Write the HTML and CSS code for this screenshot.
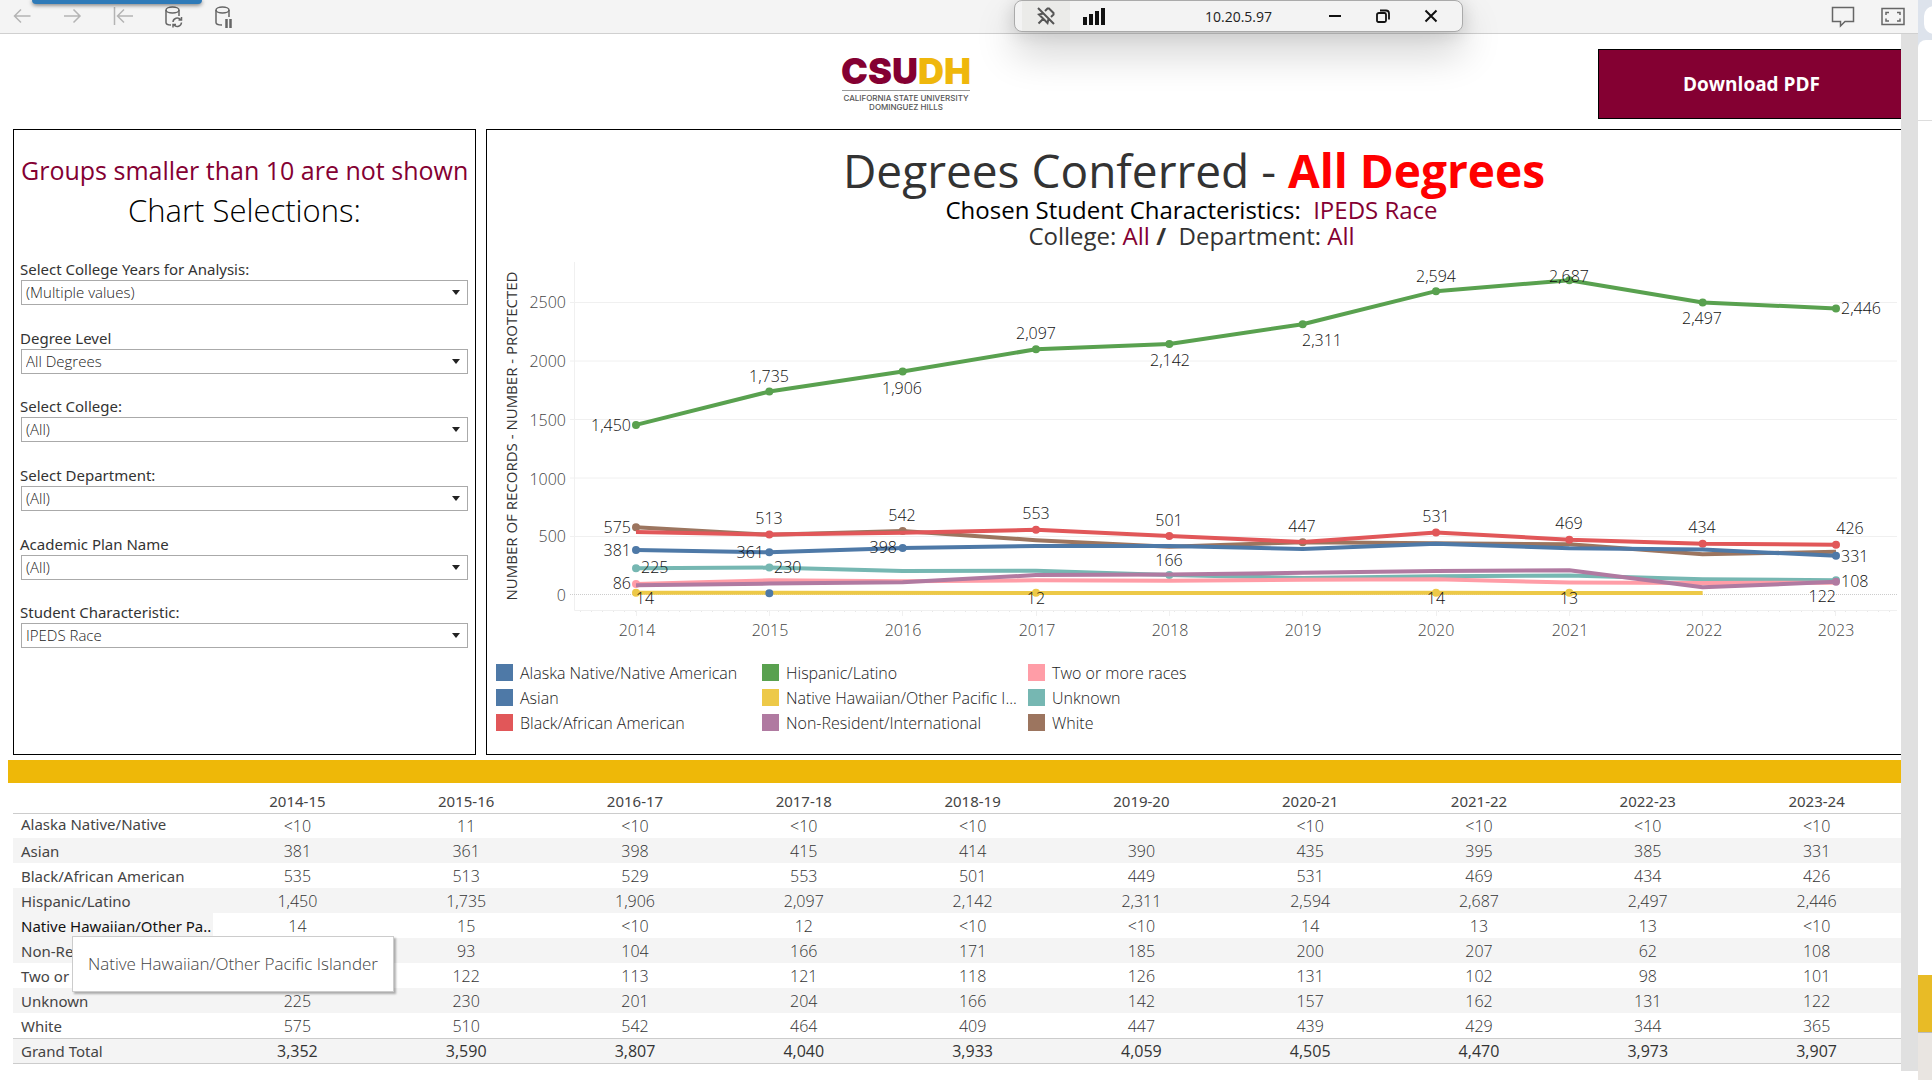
FILE: index.html
```html
<!DOCTYPE html>
<html lang="en">
<head>
<meta charset="utf-8">
<title>Degrees Conferred</title>
<link rel="stylesheet" href="styles.css">
</head>
<body>
<div class="app">
  <header class="toolbar">
    <div class="tools">
      <button class="tool faded" aria-label="Undo"><svg width="24" height="24" viewBox="0 0 24 24"><path d="M20.500 12H4M11 5.500L4.500 12L11 18.500"/></svg></button>
      <button class="tool faded" aria-label="Redo"><svg width="24" height="24" viewBox="0 0 24 24"><path d="M4 12H20M13.500 5.500L20 12L13.500 18.500"/></svg></button>
      <button class="tool faded" aria-label="Revert"><svg width="24" height="24" viewBox="0 0 24 24"><path d="M4.500 3V21M23 12H7.500M14 5.500L7.500 12L14 18.500"/></svg></button>
      <button class="tool" aria-label="Refresh data"><svg width="24" height="24" viewBox="0 0 24 24"><ellipse cx="12.500" cy="6" rx="6.500" ry="3"/><path d="M6 6V18.500Q6 21 11 21M19 6V12M13 18a4.300 4.300 0 0 1 7.500-2.500M21.500 13v3h-3M21.500 18.500a4.300 4.300 0 0 1-7.500 2.500M13 23.500v-3h3"/></svg></button>
      <button class="tool" aria-label="Pause updates"><svg width="24" height="24" viewBox="0 0 24 24"><ellipse cx="12.500" cy="6" rx="6.500" ry="3"/><path d="M6 6V18.500Q6 21 12 21M19 6V13"/><path d="M16.500 15V24M20.500 15V24" stroke-width="2.500"/></svg></button>
    </div>
    <div class="tools">
      <button class="tool" aria-label="Comments"><svg width="24" height="24" viewBox="0 0 24 24"><path d="M1.500 3.500H22.500V17.500H14L9.500 22V17.500H1.500Z"/></svg></button>
      <button class="tool" aria-label="Full screen"><svg width="24" height="24" viewBox="0 0 24 24"><path d="M1 4.500H23V20.500H1ZM5 11V8.500H8M16 8.500H19V11M19 14.500V17H16M8 17H5V14.500"/></svg></button>
    </div>
  </header>

  <div class="viewer">
    <main class="dashboard">
      <div class="banner">
        <svg class="logo" viewBox="0 0 128 54" role="img" aria-label="CSUDH">
          <text class="logo-name" x="64" y="26" text-anchor="middle"><tspan fill="#840032">CSU</tspan><tspan fill="#efb70c">DH</tspan></text>
          <path d="M0 32.500H128" stroke="#999"/>
          <text class="logo-sub" x="64" y="43" text-anchor="middle">CALIFORNIA STATE UNIVERSITY</text>
          <text class="logo-sub" x="64" y="52" text-anchor="middle">DOMINGUEZ HILLS</text>
        </svg>
        <button class="download">Download PDF</button>
      </div>

      <div class="panels">
        <section class="filters">
          <p class="note">Groups smaller than 10 are not shown</p>
          <h2>Chart Selections:</h2>
          <div class="fields">
            <div class="field"><label for="years">Select College Years for Analysis:</label><div class="pick"><select id="years"><option>(Multiple values)</option></select></div></div>
            <div class="field"><label for="level">Degree Level</label><div class="pick"><select id="level"><option>All Degrees</option></select></div></div>
            <div class="field"><label for="college">Select College:</label><div class="pick"><select id="college"><option>(All)</option></select></div></div>
            <div class="field"><label for="dept">Select Department:</label><div class="pick"><select id="dept"><option>(All)</option></select></div></div>
            <div class="field"><label for="plan">Academic Plan Name</label><div class="pick"><select id="plan"><option>(All)</option></select></div></div>
            <div class="field"><label for="trait">Student Characteristic:</label><div class="pick"><select id="trait"><option>IPEDS Race</option></select></div></div>
          </div>
        </section>

        <section class="report">
          <h1>Degrees Conferred - <strong>All Degrees</strong></h1>
          <p class="sub dark">Chosen Student Characteristics:&nbsp; <span class="hl">IPEDS Race</span></p>
          <p class="sub">College: <span class="hl">All</span> <b>/</b>&nbsp; Department: <span class="hl">All</span></p>

          <svg class="chart" viewBox="0 0 1414 400" role="img" aria-label="Degrees conferred by year">
            <path class="grid" d="M83 53.500H1410M83 112H1410M83 170.500H1410M83 229H1410M83 287.500H1410M87.500 13V361.500H1410"/>
            <path class="grid" d="M149.500 362v5M282.500 362v5M415.500 362v5M549.500 362v5M682.500 362v5M815.500 362v5M949.500 362v5M1082.500 362v5M1215.500 362v5M1348.500 362v5"/>
            <path class="minor" d="M93 362.500H1410"/>
            <path class="zero" d="M83 345.500H1410"/>

            <!-- x unit: one year from 2014; y unit: one degree -->
            <g class="series" transform="translate(149 345.500) scale(133.333 -0.11695)">
              <g stroke="#9c755f"><polyline points="0,575 1,510 2,542 3,464 4,409 5,447 6,439 7,429 8,344 9,365"/><path class="dots" d="M0 575h0M2 542h0M5 447h0"/></g>
              <g stroke="#76b7b2"><polyline points="0,225 1,230 2,201 3,204 4,166 5,142 6,157 7,162 8,131 9,122"/><path class="dots" d="M0 225h0M1 230h0M4 166h0M9 122h0"/></g>
              <g stroke="#ff9da7"><polyline points="0,90 1,122 2,113 3,121 4,118 5,126 6,131 7,102 8,98 9,101"/><path class="dots" d="M0 90h0"/></g>
              <g stroke="#b07aa1"><polyline points="0,79 1,93 2,104 3,166 4,171 5,185 6,200 7,207 8,62 9,108"/><path class="dots" d="M9 108h0"/></g>
              <g stroke="#edc948"><polyline points="0,14 1,15 3,12 6,14 7,13 8,13"/><path class="dots" d="M0 14h0M3 14h0M6 14h0M7 14h0"/></g>
              <g stroke="#59a14f"><polyline points="0,1450 1,1735 2,1906 3,2097 4,2142 5,2311 6,2594 7,2687 8,2497 9,2446"/><path class="dots" d="M0 1450h0M1 1735h0M2 1906h0M3 2097h0M4 2142h0M5 2311h0M6 2594h0M7 2687h0M8 2497h0M9 2446h0"/></g>
              <g stroke="#e15759"><polyline points="0,535 1,513 2,529 3,553 4,501 5,449 6,531 7,469 8,434 9,426"/><path class="dots" d="M1 513h0M3 553h0M4 501h0M6 531h0M7 469h0M8 434h0M9 426h0"/></g>
              <g stroke="#4e79a7"><polyline points="0,381 1,361 2,398 3,415 4,414 5,390 6,435 7,395 8,385 9,331"/><path class="dots" d="M0 381h0M1 361h0M2 398h0M9 331h0M1 11h0"/></g>
            </g>

            <g class="ticks" text-anchor="end">
              <text x="79" y="59">2500</text><text x="79" y="118">2000</text><text x="79" y="177">1500</text><text x="79" y="236">1000</text><text x="79" y="293">500</text><text x="79" y="352">0</text>
            </g>
            <g class="ticks" text-anchor="middle">
              <text x="150" y="387">2014</text><text x="283" y="387">2015</text><text x="416" y="387">2016</text><text x="550" y="387">2017</text><text x="683" y="387">2018</text><text x="816" y="387">2019</text><text x="949" y="387">2020</text><text x="1083" y="387">2021</text><text x="1217" y="387">2022</text><text x="1349" y="387">2023</text>
            </g>
            <text class="axis-title" transform="translate(30 187) rotate(-90)" text-anchor="middle">NUMBER OF RECORDS - NUMBER - PROTECTED</text>

            <g class="marks" text-anchor="middle">
              <text x="282" y="133">1,735</text><text x="415" y="145">1,906</text><text x="549" y="90">2,097</text><text x="683" y="117">2,142</text><text x="835" y="97">2,311</text><text x="949" y="33">2,594</text><text x="1082" y="33">2,687</text><text x="1215" y="75">2,497</text>
              <text x="282" y="275">513</text><text x="415" y="272">542</text><text x="549" y="270">553</text><text x="682" y="277">501</text><text x="682" y="317">166</text><text x="815" y="283">447</text><text x="949" y="273">531</text><text x="1082" y="280">469</text><text x="1215" y="284">434</text><text x="1363" y="285">426</text>
              <text x="158" y="355">14</text><text x="549" y="355">12</text><text x="949" y="355">14</text><text x="1082" y="355">13</text>
            </g>
            <g class="marks" text-anchor="end">
              <text x="144" y="182">1,450</text><text x="144" y="284">575</text><text x="144" y="307">381</text><text x="144" y="340">86</text><text x="277" y="309">361</text><text x="410" y="304">398</text><text x="1349" y="353">122</text>
            </g>
            <g class="marks">
              <text x="154" y="324">225</text><text x="287" y="324">230</text><text x="1354" y="65">2,446</text><text x="1354" y="313">331</text><text x="1354" y="338">108</text>
            </g>
          </svg>

          <ul class="legend">
            <li><i class="blue"></i>Alaska Native/Native American</li>
            <li><i class="blue"></i>Asian</li>
            <li><i class="red"></i>Black/African American</li>
            <li><i class="green"></i>Hispanic/Latino</li>
            <li><i class="yellow"></i>Native Hawaiian/Other Pacific I...</li>
            <li><i class="purple"></i>Non-Resident/International</li>
            <li><i class="pink"></i>Two or more races</li>
            <li><i class="teal"></i>Unknown</li>
            <li><i class="brown"></i>White</li>
          </ul>
        </section>
      </div>

      <div class="band"></div>

      <div class="crosstab">
        <table>
          <thead><tr><td class="name"></td><th>2014-15</th><th>2015-16</th><th>2016-17</th><th>2017-18</th><th>2018-19</th><th>2019-20</th><th>2020-21</th><th>2021-22</th><th>2022-23</th><th>2023-24</th></tr></thead>
          <tbody>
            <tr class="first"><th class="name">Alaska Native/Native</th><td>&lt;10</td><td>11</td><td>&lt;10</td><td>&lt;10</td><td>&lt;10</td><td></td><td>&lt;10</td><td>&lt;10</td><td>&lt;10</td><td>&lt;10</td></tr>
            <tr class="shade"><th class="name">Asian</th><td>381</td><td>361</td><td>398</td><td>415</td><td>414</td><td>390</td><td>435</td><td>395</td><td>385</td><td>331</td></tr>
            <tr><th class="name">Black/African American</th><td>535</td><td>513</td><td>529</td><td>553</td><td>501</td><td>449</td><td>531</td><td>469</td><td>434</td><td>426</td></tr>
            <tr class="shade"><th class="name">Hispanic/Latino</th><td>1,450</td><td>1,735</td><td>1,906</td><td>2,097</td><td>2,142</td><td>2,311</td><td>2,594</td><td>2,687</td><td>2,497</td><td>2,446</td></tr>
            <tr><th class="name hover">Native Hawaiian/Other Pa..</th><td>14</td><td>15</td><td>&lt;10</td><td>12</td><td>&lt;10</td><td>&lt;10</td><td>14</td><td>13</td><td>13</td><td>&lt;10</td></tr>
            <tr class="shade"><th class="name">Non-Re</th><td></td><td>93</td><td>104</td><td>166</td><td>171</td><td>185</td><td>200</td><td>207</td><td>62</td><td>108</td></tr>
            <tr><th class="name">Two or</th><td></td><td>122</td><td>113</td><td>121</td><td>118</td><td>126</td><td>131</td><td>102</td><td>98</td><td>101</td></tr>
            <tr class="shade"><th class="name">Unknown</th><td>225</td><td>230</td><td>201</td><td>204</td><td>166</td><td>142</td><td>157</td><td>162</td><td>131</td><td>122</td></tr>
            <tr><th class="name">White</th><td>575</td><td>510</td><td>542</td><td>464</td><td>409</td><td>447</td><td>439</td><td>429</td><td>344</td><td>365</td></tr>
          </tbody>
          <tfoot>
            <tr class="shade"><th class="name">Grand Total</th><td>3,352</td><td>3,590</td><td>3,807</td><td>4,040</td><td>3,933</td><td>4,059</td><td>4,505</td><td>4,470</td><td>3,973</td><td>3,907</td></tr>
          </tfoot>
        </table>
        <div class="tooltip" role="tooltip">Native Hawaiian/Other Pacific Islander</div>
      </div>
    </main>
    <div class="scrollbar"></div>
  </div>
</div>

<aside class="edge">
  <div class="edge-tab"></div>
  <div class="edge-head"></div>
  <div class="edge-body"></div>
  <div class="edge-gold"></div>
  <div class="edge-foot"></div>
</aside>

<div class="blue-tab"></div>
<div class="session">
  <div class="session-group">
    <button class="pin" aria-label="Unpin"><svg width="18" height="18" viewBox="0 0 18 18"><path d="M1 1L17 17M8 4L10.500 1.500H12L16.500 6V7.500L14 10M6 6.500L2 7.500L10.500 16L11.500 12M6 12L1.500 16.500" fill="none" stroke="#555" stroke-width="2"/></svg></button>
    <button aria-label="Connection"><svg width="22" height="18" viewBox="0 0 22 18"><path d="M0 10h4v8H0zM6 7h4v11H6zM12 4h4v14h-4zM18 1h4v17h-4z" fill="#111"/></svg></button>
  </div>
  <span>10.20.5.97</span>
  <div class="session-group end">
    <button aria-label="Minimize"><svg width="14" height="14" viewBox="0 0 14 14"><path d="M1 7H13" stroke="#111" stroke-width="2"/></svg></button>
    <button aria-label="Restore"><svg width="14" height="14" viewBox="0 0 14 14"><path d="M3 4H8.500Q10 4 10 5.500V11.500Q10 13 8.500 13H2.500Q1 13 1 11.500V5.500Q1 4 3 4ZM4 1.500H10Q13 1.500 13 4.500V10.500" fill="none" stroke="#111" stroke-width="1.800"/></svg></button>
    <button aria-label="Close"><svg width="14" height="14" viewBox="0 0 14 14"><path d="M1.500 1.500L12.500 12.500M12.500 1.500L1.500 12.500" stroke="#111" stroke-width="2"/></svg></button>
  </div>
</div>
</body>
</html>
```
FILE: styles.css
```css
* { box-sizing: border-box; }

body {
  margin: 0;
  min-height: 100vh;
  display: flex;
  overflow: hidden;
  background: #fff;
  color: #333;
  font-family: "Open Sans", "Noto Sans", sans-serif;
  font-size: 15px;
}

h1, h2, p, ul { margin: 0; padding: 0; font-weight: 400; }
button { border: 0; padding: 0; background: none; font: inherit; color: inherit; }

.app { flex: 1; min-width: 0; display: flex; flex-direction: column; }

/* Toolbar */
.toolbar {
  height: 34px;
  display: flex;
  justify-content: space-between;
  padding: 4px 13px 5px 10px;
  background: #f4f4f4;
  border-bottom: 1px solid #d0d0d0;
}
.tools { display: flex; gap: 26px; }
.tool { width: 24px; height: 24px; }
.tool svg { display: block; overflow: visible; fill: none; stroke: #666; stroke-width: 1.5; }
.faded svg { stroke: #b4b4b4; }

.viewer { flex: 1; display: flex; }
.dashboard { flex: 1; min-width: 0; }
.scrollbar { width: 17px; margin-bottom: 9px; background: #e0e0e0; }

/* Banner */
.banner {
  display: grid;
  grid-template-columns: 55fr 128px 41fr 303px;
  align-items: start;
  padding: 15px 0 10px;
}
.logo { grid-column: 2; margin-top: 9px; width: 128px; height: 54px; overflow: visible; }
.logo-name { font: 900 36px Inter, sans-serif; }
.logo-sub { font: 500 8px Inter, sans-serif; fill: #555; }
.download {
  grid-column: 4;
  height: 70px;
  padding-left: 3px;
  background: #840032;
  border: 1px solid #000;
  border-right: 0;
  color: #fff;
  font-size: 19px;
  font-weight: 700;
}

/* Panels */
.panels { display: grid; grid-template-columns: 463px 1fr; gap: 10px; padding-left: 13px; min-height: 626px; }
.filters { border: 1px solid #000; padding: 22px 7px 0; }
.note { font-size: 25px; line-height: 36px; text-align: center; color: #840032; white-space: nowrap; }
.filters h2 { font-size: 31px; font-weight: 300; line-height: 44px; text-align: center; color: #000; margin-bottom: 26px; }
.fields { display: grid; grid-template-rows: repeat(6, 1fr); height: 412px; }
.field label { display: block; margin-left: -1px; line-height: 22px; color: #333; font-family: "Noto Sans", sans-serif; }
.pick { position: relative; }
.pick::after {
  content: "";
  position: absolute;
  right: 8px;
  top: 10px;
  border: 4px solid transparent;
  border-top: 5px solid #222;
  border-bottom: 0;
}
.pick select {
  display: block;
  width: 100%;
  height: 25px;
  padding: 0 4px 1px;
  appearance: none;
  border: 1px solid #aaa;
  border-radius: 0;
  background: #fff;
  color: #222;
  font: 300 15px "Open Sans", sans-serif;
}

.report { border: 1px solid #000; border-right: 0; padding-top: 14px; min-width: 0; }
.report h1 { font-size: 46px; line-height: 53px; text-align: center; }
.report h1 strong { color: #f00; font-weight: 700; }
.sub { padding-right: 5px; font-size: 24px; line-height: 26px; text-align: center; }
.sub.dark { color: #000; }
.hl { color: #840032; }

/* Chart */
.chart { display: block; width: 100%; font-size: 16px; font-weight: 300; }
.grid { fill: none; stroke: #f0f0f0; }
.minor { stroke: #e8e8e8; stroke-dasharray: 1 10; fill: none; }
.zero { stroke: #ccc; stroke-dasharray: 1 1; fill: none; }
.series { fill: none; stroke-width: 4px; stroke-linejoin: round; }
.series polyline, .series path { vector-effect: non-scaling-stroke; }
.series .dots { stroke-width: 8px; stroke-linecap: round; }
.ticks { fill: #444; }
.marks { fill: #111; }
.axis-title { font-size: 15px; font-weight: 400; fill: #333; }

.legend {
  display: grid;
  grid-template-rows: repeat(3, 25px);
  grid-auto-flow: column;
  grid-auto-columns: 266px;
  margin: 11px 0 0 9px;
  list-style: none;
  font-size: 16px;
  font-weight: 300;
  color: #222;
}
.legend li { display: flex; align-items: center; gap: 7px; white-space: nowrap; }
.legend i { width: 17px; height: 17px; }
.blue { background: #4e79a7; }
.red { background: #e15759; }
.green { background: #59a14f; }
.yellow { background: #edc948; }
.purple { background: #b07aa1; }
.pink { background: #ff9da7; }
.teal { background: #76b7b2; }
.brown { background: #9c755f; }

.band { height: 23px; margin: 5px 0 0 8px; background: #eeb808; }

/* Crosstab */
.crosstab { position: relative; padding-left: 13px; }
table { width: 100%; table-layout: fixed; border-collapse: separate; border-spacing: 0; }
th, td { padding: 0; height: 25px; line-height: 20px; text-align: center; font-weight: 300; color: #333; font-size: 16px; }
th { font-weight: 400; font-size: 15px; color: #444; font-family: "Noto Sans", sans-serif; }
.name { width: 200px; padding-left: 8px; text-align: left; white-space: nowrap; }
thead th, thead td { height: 31px; padding-top: 5px; border-bottom: 1px solid #ccc; }
.first th, .first td { height: 24px; }
.first .name { padding-bottom: 4px; }
.shade th, .shade td, .hover { background: #f4f4f4; }
.hover { color: #111; }
tfoot th, tfoot td { height: 26px; border-top: 1px solid #ccc; border-bottom: 1px solid #ccc; font-weight: 400; }
.tooltip {
  position: absolute;
  left: 72px;
  top: 153px;
  padding: 16px 15px;
  line-height: 22px;
  background: #fff;
  border: 1px solid #ccc;
  box-shadow: 2px 2px 2px rgba(0, 0, 0, .3);
  color: #444;
  font-size: 17px;
  font-weight: 300;
  white-space: nowrap;
}

/* Neighbouring window */
.edge { width: 14px; display: flex; flex-direction: column; background: #dde3ec; overflow: hidden; }
.edge-tab { width: 28px; height: 28px; margin: 6px 0 6px 6px; border-radius: 10px; background: #fff; }
.edge-head { height: 81px; background: #fff; border-bottom: 1px solid #ddd; border-radius: 8px 0 0 0; }
.edge-body { flex: 1; background: #fff; }
.edge-gold { height: 57px; background: #e8bb26; }
.edge-foot { height: 48px; background: #e9e5e1; border-top: 1px solid #bbb; }

/* Floating over the page */
.blue-tab {
  position: absolute;
  left: 32px;
  top: 0;
  width: 170px;
  height: 4px;
  background: #2e7ab8;
  border-radius: 0 0 4px 4px;
  box-shadow: 0 1px 4px rgba(0, 0, 0, .6);
}
.session {
  position: absolute;
  left: 1014px;
  top: 0;
  width: 449px;
  height: 32px;
  padding: 0 7px;
  display: grid;
  grid-template-columns: 1fr auto 1fr;
  align-items: center;
  background: #f3f3f3;
  border: 1px solid #aaa;
  border-radius: 8px;
  box-shadow: 0 20px 40px rgba(0, 0, 0, .2), 0 2px 18px rgba(0, 0, 0, .14);
  color: #222;
  font-size: 14px;
}
.session-group { display: flex; }
.session-group.end { justify-content: flex-end; }
.session button { width: 48px; height: 30px; display: grid; place-items: center; }
.session .pin { background: #ebebe9; }
```
